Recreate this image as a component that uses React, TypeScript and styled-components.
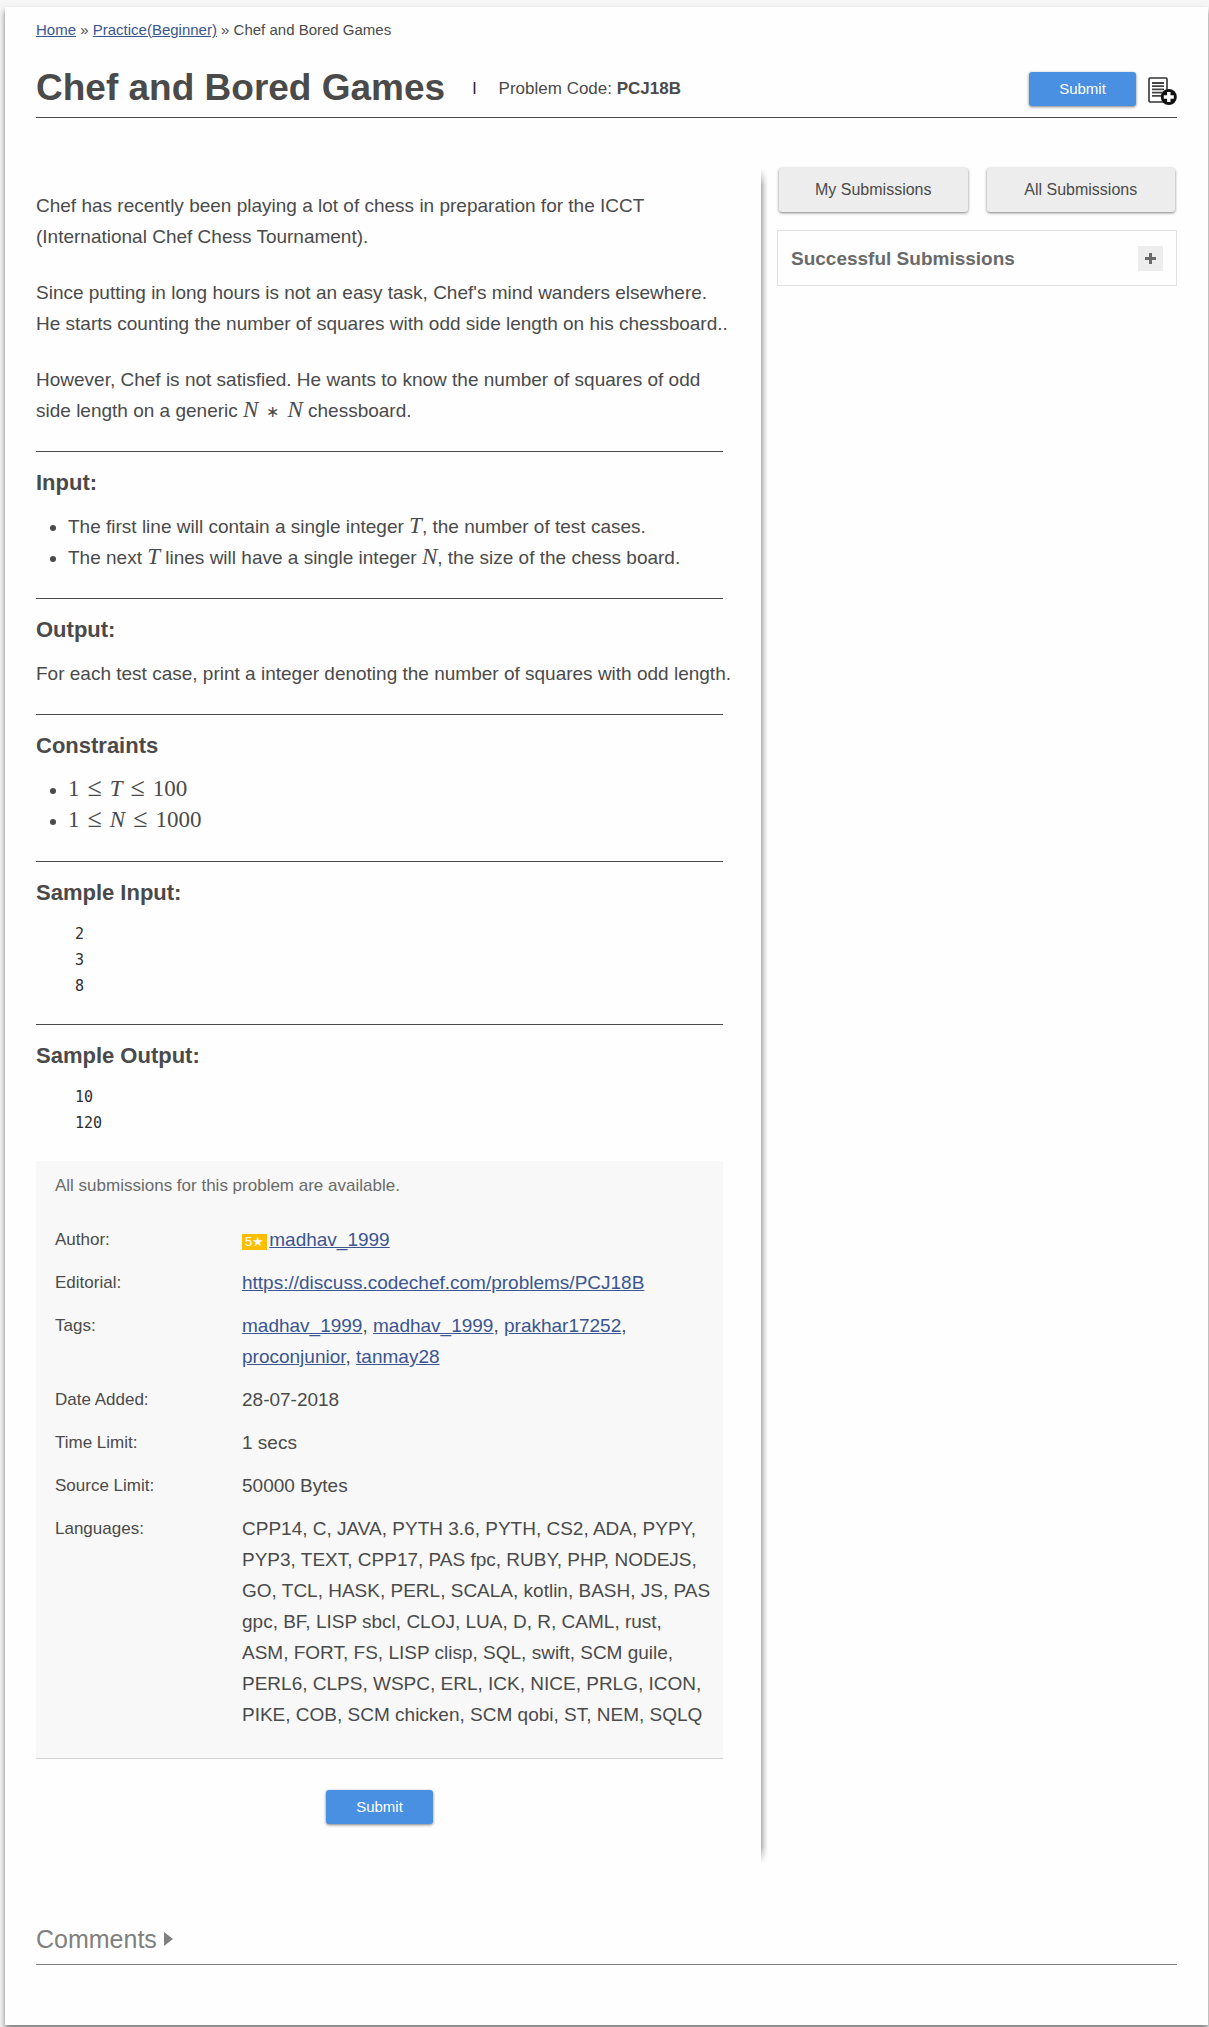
import { Fragment, useState } from 'react';
import styled, { createGlobalStyle } from 'styled-components';

const GlobalStyle = createGlobalStyle`
  *, *::before, *::after { box-sizing: border-box; }
  body {
    margin: 0;
    background: #f6f6f6;
    color: #4a4a4a;
    font: 19px/31px "Liberation Sans", Arial, sans-serif;
  }
`;

const Page = styled.div`
  margin: 7px 1px 2px 5px;
  padding: 8px 31px 60px;
  background: #fefefe;
  box-shadow: 0 4px 6px rgba(0, 0, 0, 0.5);
`;

const Link = styled.a`
  color: #3b5590;
  text-decoration: underline;
`;

const Breadcrumb = styled.nav`
  font-size: 15px;
  line-height: 30px;
`;

const Header = styled.header`
  display: flex;
  align-items: center;
  justify-content: space-between;
  height: 73px;
  padding-top: 16px;
  border-bottom: 1px solid #4a4a4a;
`;

const TitleGroup = styled.div`
  display: flex;
  align-items: center;
`;

const Title = styled.h1`
  margin: 0;
  padding-bottom: 3px;
  font-size: 37px;
  line-height: 44px;
`;

const Separator = styled.span`
  margin: 0 22px 0 27px;
  color: #222;
  font-size: 16px;
  line-height: 20px;
`;

const ProblemCode = styled.span`
  font-size: 17px;
  line-height: 24px;
`;

const HeaderActions = styled.div`
  display: flex;
  align-items: center;
  gap: 12px;
`;

const SubmitButton = styled.button`
  width: 107px;
  height: 34px;
  border: 0;
  border-radius: 3px;
  background: #4a90e2;
  color: #fff;
  font: 15px/20px "Liberation Sans", Arial, sans-serif;
  box-shadow: 0 1px 3px rgba(0, 0, 0, 0.5);
  cursor: pointer;
`;

const IconButton = styled.button`
  display: flex;
  padding: 3px 0 0;
  border: 0;
  background: none;
  cursor: pointer;
`;

const Columns = styled.div`
  display: grid;
  grid-template-columns: minmax(0, 1fr) 400px;
  gap: 15px;
  margin-top: 49px;
`;

const Main = styled.main`
  position: relative;
  padding: 23px 39px 39px 0;

  &::after {
    content: "";
    position: absolute;
    top: 2px;
    right: -6px;
    bottom: 0;
    width: 7px;
    background: linear-gradient(to right, #b0b0b0, #dcdcdc 45%, rgba(254, 254, 254, 0));
    mask-image: linear-gradient(transparent, #000 16px, #000 calc(100% - 16px), transparent);
  }
`;

const Paragraph = styled.p`
  margin: 0 -9px 25px 0;
`;

const Rule = styled.hr`
  margin: 0;
  border: 0;
  border-top: 1px solid #4a4a4a;
`;

const Heading = styled.h3`
  margin: 16px 0 13px;
  font-size: 22px;
  line-height: 30px;
`;

const BulletList = styled.ul`
  margin: 0 0 25px;
  padding: 0 0 0 32px;
`;

const Bullet = styled.li`
  height: 31px;
`;

const MathText = styled.span`
  display: inline-flex;
  align-items: baseline;
  gap: 8px;
  font: 23px/23px "Liberation Serif", "Times New Roman", serif;
`;

const Operator = styled.span<{ $size: number }>`
  font-size: ${(p) => p.$size}px;
`;

const Sample = styled.pre`
  margin: 0 0 25px;
  padding: 0 0 0 39px;
  color: #2e2e2e;
  font: 15px/26px "DejaVu Sans Mono", monospace;
`;

const InfoPanel = styled.section`
  padding: 9px 8px 22px 19px;
  background: #f8f8f8;
  border-bottom: 1px solid #d4d4d4;
`;

const Notice = styled.p`
  margin: 0 0 17px;
  color: #6a6a6a;
  font-size: 17px;
`;

const InfoTable = styled.table`
  width: 100%;
  border-collapse: collapse;

  th, td {
    padding: 6px 0;
    text-align: left;
    vertical-align: top;
    font-weight: normal;
  }
  th {
    width: 187px;
    font-size: 17px;
  }
`;

const Line = styled.span`
  display: block;
  white-space: nowrap;
`;

const Rating = styled.span`
  display: inline-block;
  margin-right: 2px;
  padding: 0 3px;
  background: #ffbf00;
  color: #fff;
  font-size: 13px;
  line-height: 16px;
`;

const FooterAction = styled.div`
  display: flex;
  justify-content: center;
  padding-top: 31px;
`;

const ButtonRow = styled.div`
  display: grid;
  grid-template-columns: 1fr 1fr;
  gap: 19px;
  padding: 1px 2px 0;
`;

const GreyButton = styled.button`
  height: 44px;
  border: 0;
  border-radius: 3px;
  background: #ededed;
  color: #4a4a4a;
  font: 16px/24px "Liberation Sans", Arial, sans-serif;
  box-shadow: 0 1px 3px rgba(0, 0, 0, 0.5);
  cursor: pointer;
`;

const Card = styled.section`
  display: flex;
  align-items: center;
  justify-content: space-between;
  height: 56px;
  margin-top: 18px;
  padding: 0 13px;
  border: 1px solid #e2e2e2;
`;

const CardTitle = styled.h2`
  margin: 0;
  padding-top: 2px;
  color: #6a6a6a;
  font-size: 19px;
  line-height: 28px;
`;

const ToggleButton = styled.button`
  display: grid;
  place-items: center;
  width: 25px;
  height: 25px;
  padding: 0;
  border: 0;
  background: #ededed;
  cursor: pointer;
`;

const CommentsBar = styled.section`
  margin-top: 60px;
  padding-bottom: 9px;
  border-bottom: 1px solid #808080;
`;

const CommentsButton = styled.button`
  display: flex;
  align-items: center;
  gap: 7px;
  padding: 0;
  border: 0;
  background: none;
  color: #808080;
  font: 25px/32px "Liberation Sans", Arial, sans-serif;
  cursor: pointer;
`;

const tags = ['madhav_1999', 'madhav_1999', 'prakhar17252', 'proconjunior', 'tanmay28'];

const languages = [
  'CPP14, C, JAVA, PYTH 3.6, PYTH, CS2, ADA, PYPY,',
  'PYP3, TEXT, CPP17, PAS fpc, RUBY, PHP, NODEJS,',
  'GO, TCL, HASK, PERL, SCALA, kotlin, BASH, JS, PAS',
  'gpc, BF, LISP sbcl, CLOJ, LUA, D, R, CAML, rust,',
  'ASM, FORT, FS, LISP clisp, SQL, swift, SCM guile,',
  'PERL6, CLPS, WSPC, ERL, ICK, NICE, PRLG, ICON,',
  'PIKE, COB, SCM chicken, SCM qobi, ST, NEM, SQLQ',
];

const details = [
  {
    label: 'Author:',
    value: (
      <>
        <Rating>5★</Rating>
        <Link href="#author">madhav_1999</Link>
      </>
    ),
  },
  {
    label: 'Editorial:',
    value: <Link href="#editorial">https://discuss.codechef.com/problems/PCJ18B</Link>,
  },
  {
    label: 'Tags:',
    value: tags.map((tag, i) => (
      <Fragment key={i}>
        {i > 0 && ', '}
        <Link href="#tag">{tag}</Link>
      </Fragment>
    )),
  },
  { label: 'Date Added:', value: '28-07-2018' },
  { label: 'Time Limit:', value: '1 secs' },
  { label: 'Source Limit:', value: '50000 Bytes' },
  { label: 'Languages:', value: languages.map((line) => <Line key={line}>{line}</Line>) },
];

const AddNoteIcon = () => (
  <svg width="29" height="28" viewBox="0 0 29 28" aria-hidden="true">
    <rect x="1" y="1" width="18" height="24" rx="1" fill="#fff" stroke="#333" strokeWidth="1.6" />
    <path d="M4 6h12M4 9.2h12M4 12.4h12M4 15.6h10M4 18.8h9" stroke="#444" strokeWidth="1.8" />
    <circle cx="20.8" cy="20" r="8" fill="#111" />
    <path d="M20.8 15v10M15.8 20h10" stroke="#fff" strokeWidth="3.4" />
  </svg>
);

const AtMost = () => <Operator $size={26}>≤</Operator>;

const App = () => {
  const [cardOpen, setCardOpen] = useState(false);
  return (
    <>
      <GlobalStyle />
      <Page>
        <Breadcrumb aria-label="Breadcrumb">
          <Link href="#home">Home</Link> » <Link href="#practice">Practice(Beginner)</Link> » Chef and Bored Games
        </Breadcrumb>
        <Header>
          <TitleGroup>
            <Title>Chef and Bored Games</Title>
            <Separator>I</Separator>
            <ProblemCode>
              Problem Code: <strong>PCJ18B</strong>
            </ProblemCode>
          </TitleGroup>
          <HeaderActions>
            <SubmitButton type="button">Submit</SubmitButton>
            <IconButton type="button" aria-label="Add to list">
              <AddNoteIcon />
            </IconButton>
          </HeaderActions>
        </Header>
        <Columns>
          <Main>
            <Paragraph>
              Chef has recently been playing a lot of chess in preparation for the ICCT (International Chef Chess
              Tournament).
            </Paragraph>
            <Paragraph>
              Since putting in long hours is not an easy task, Chef's mind wanders elsewhere. He starts counting the
              number of squares with odd side length on his chessboard..
            </Paragraph>
            <Paragraph>
              However, Chef is not satisfied. He wants to know the number of squares of odd side length on a generic{' '}
              <MathText>
                <i>N</i>
                <Operator $size={16}>∗</Operator>
                <i>N</i>
              </MathText>{' '}
              chessboard.
            </Paragraph>
            <Rule />
            <Heading>Input:</Heading>
            <BulletList>
              <Bullet>
                The first line will contain a single integer <MathText><i>T</i></MathText>, the number of test cases.
              </Bullet>
              <Bullet>
                The next <MathText><i>T</i></MathText> lines will have a single integer <MathText><i>N</i></MathText>, the
                size of the chess board.
              </Bullet>
            </BulletList>
            <Rule />
            <Heading>Output:</Heading>
            <Paragraph>For each test case, print a integer denoting the number of squares with odd length.</Paragraph>
            <Rule />
            <Heading>Constraints</Heading>
            <BulletList>
              <Bullet>
                <MathText>
                  <span>1</span>
                  <AtMost />
                  <i>T</i>
                  <AtMost />
                  <span>100</span>
                </MathText>
              </Bullet>
              <Bullet>
                <MathText>
                  <span>1</span>
                  <AtMost />
                  <i>N</i>
                  <AtMost />
                  <span>1000</span>
                </MathText>
              </Bullet>
            </BulletList>
            <Rule />
            <Heading>Sample Input:</Heading>
            <Sample>{'2\n3\n8'}</Sample>
            <Rule />
            <Heading>Sample Output:</Heading>
            <Sample>{'10\n120'}</Sample>
            <InfoPanel>
              <Notice>All submissions for this problem are available.</Notice>
              <InfoTable>
                <tbody>
                  {details.map((row) => (
                    <tr key={row.label}>
                      <th scope="row">{row.label}</th>
                      <td>{row.value}</td>
                    </tr>
                  ))}
                </tbody>
              </InfoTable>
            </InfoPanel>
            <FooterAction>
              <SubmitButton type="button">Submit</SubmitButton>
            </FooterAction>
          </Main>
          <aside>
            <ButtonRow>
              <GreyButton type="button">My Submissions</GreyButton>
              <GreyButton type="button">All Submissions</GreyButton>
            </ButtonRow>
            <Card>
              <CardTitle>Successful Submissions</CardTitle>
              <ToggleButton
                type="button"
                aria-label="Toggle successful submissions"
                aria-expanded={cardOpen}
                onClick={() => setCardOpen(!cardOpen)}
              >
                <svg width="11" height="11" viewBox="0 0 11 11" aria-hidden="true">
                  <path d={cardOpen ? 'M0 5.5h11' : 'M5.5 0v11M0 5.5h11'} stroke="#6a6a6a" strokeWidth="3" />
                </svg>
              </ToggleButton>
            </Card>
          </aside>
        </Columns>
        <CommentsBar>
          <CommentsButton type="button">
            Comments
            <svg width="9" height="14" viewBox="0 0 9 14" aria-hidden="true">
              <path d="M0 0l9 7-9 7z" fill="#808080" />
            </svg>
          </CommentsButton>
        </CommentsBar>
      </Page>
    </>
  );
};

export default App;
